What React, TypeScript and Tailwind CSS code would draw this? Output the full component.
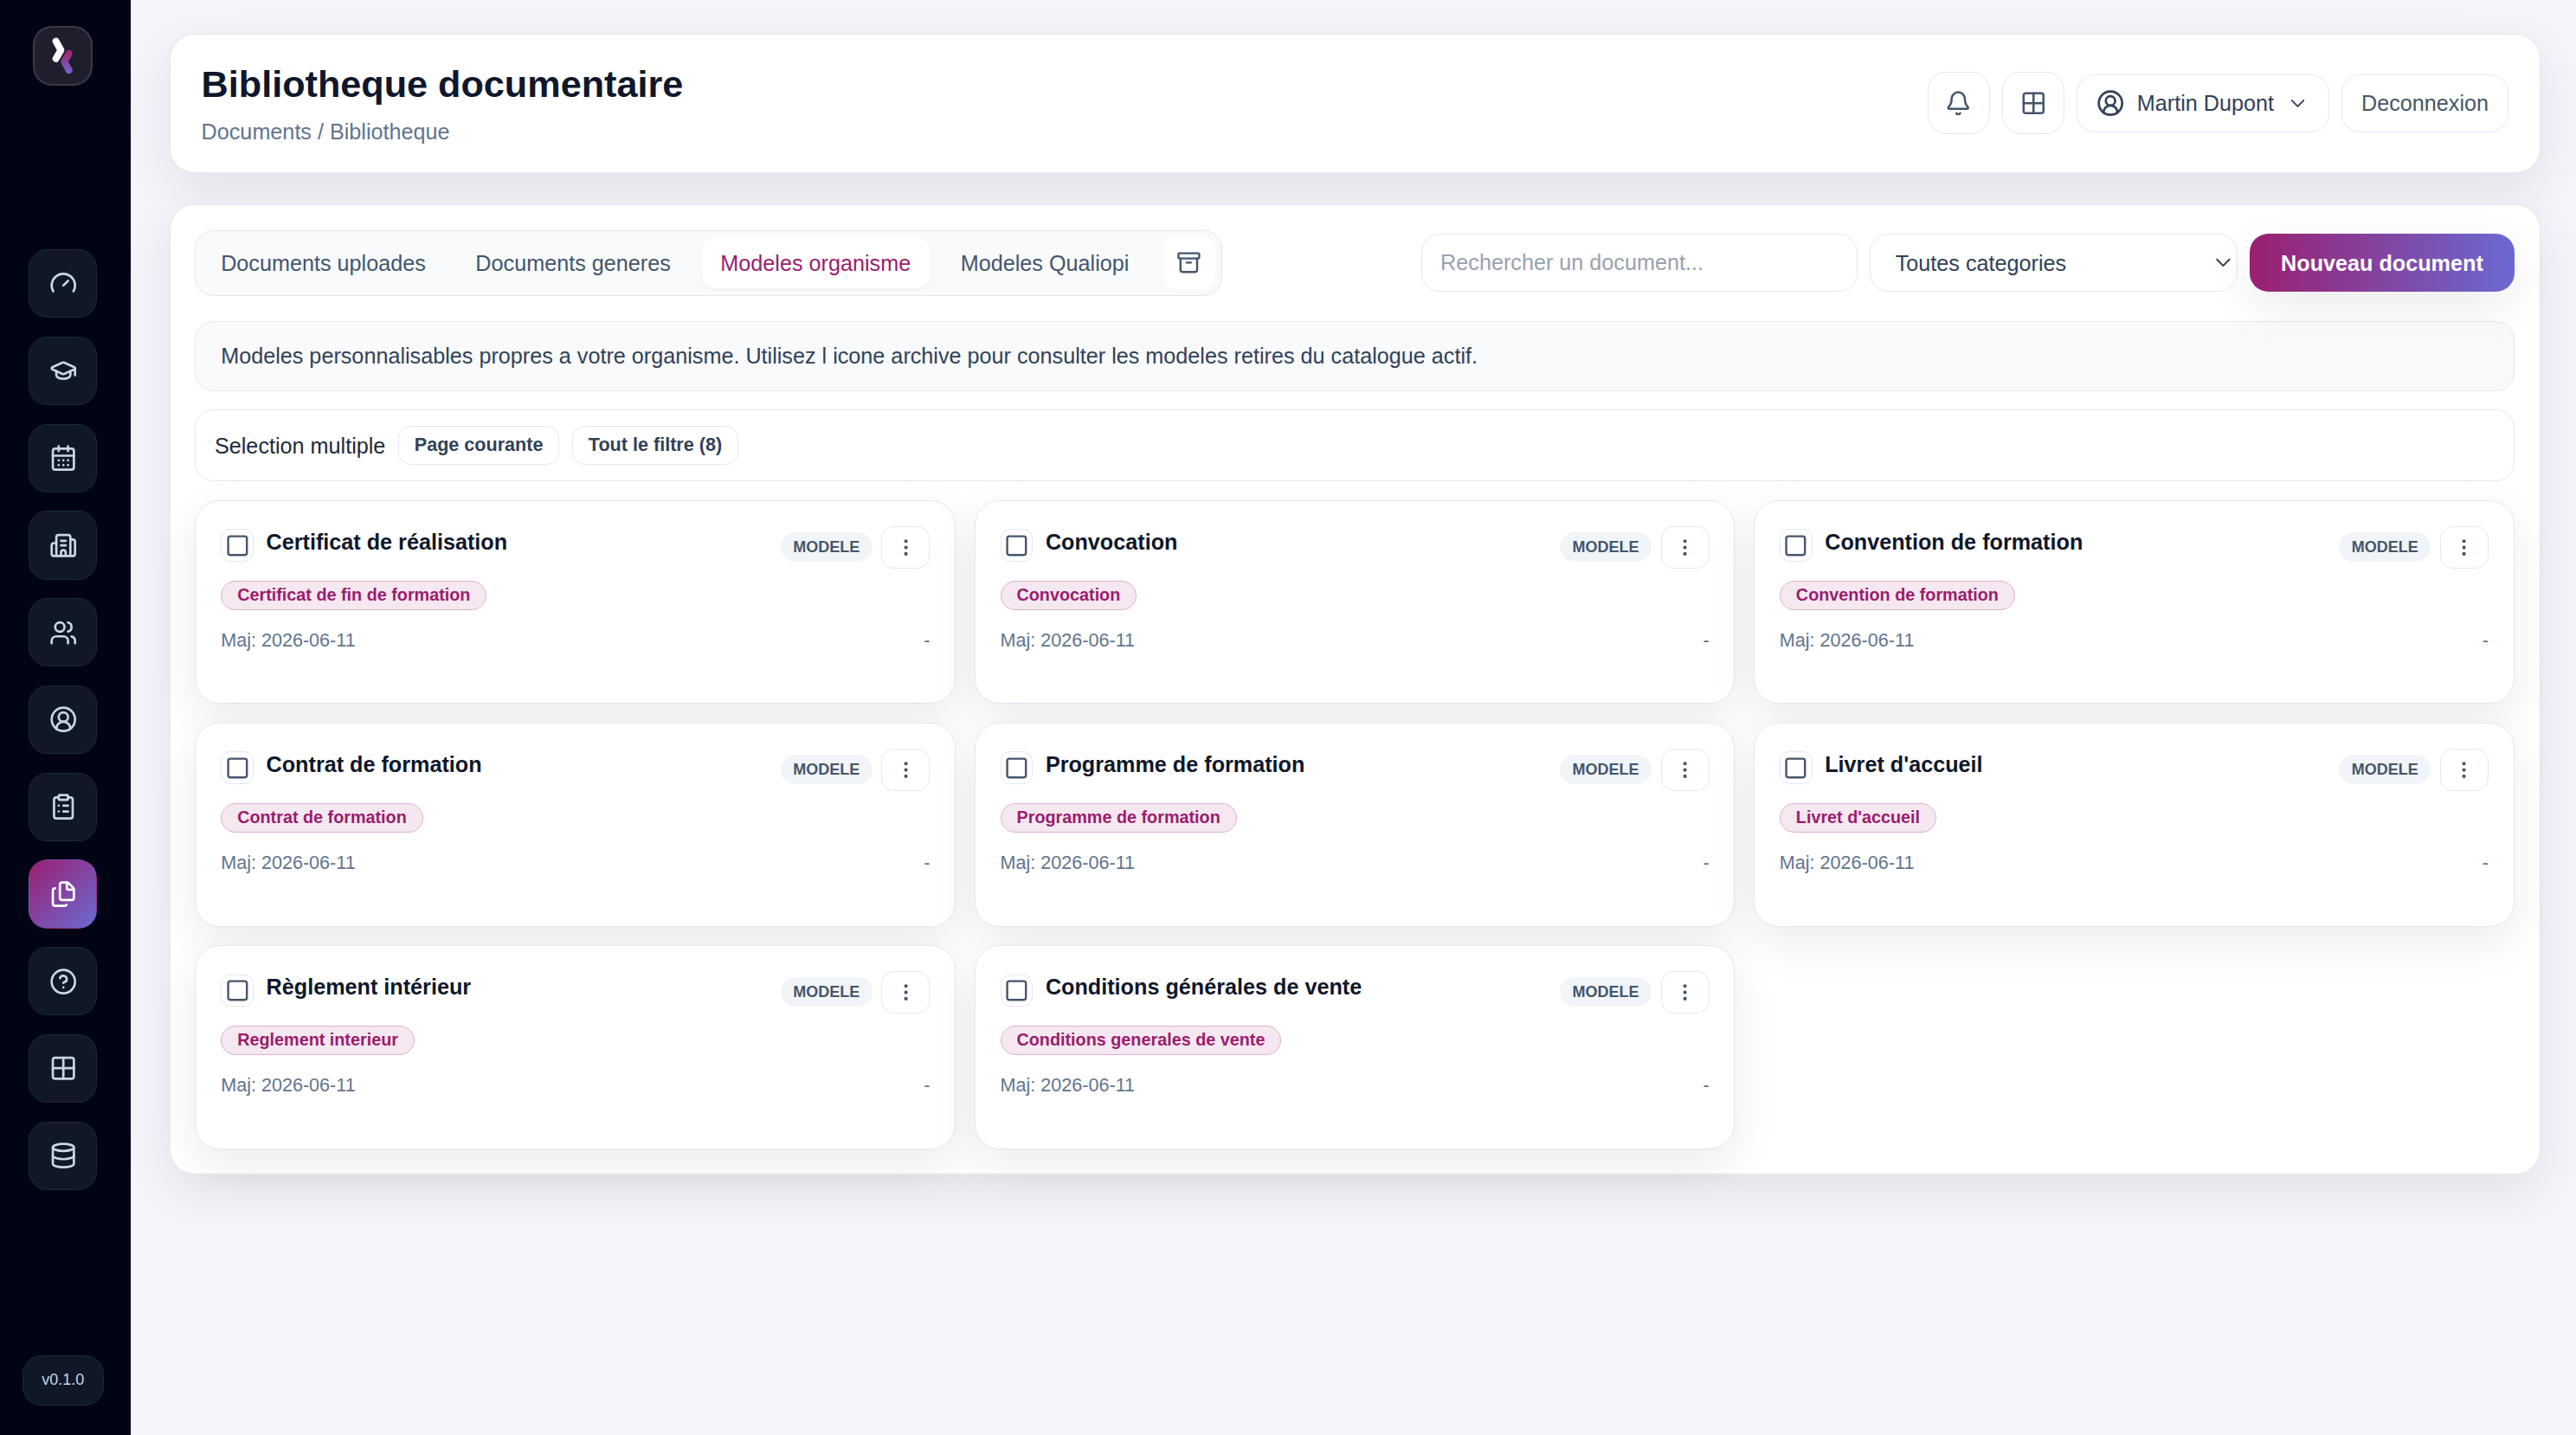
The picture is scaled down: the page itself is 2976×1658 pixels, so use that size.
import React from "react";
import {
  Archive,
  Bell,
  Building2,
  CalendarDays,
  ChevronDown,
  CircleHelp,
  CircleUserRound,
  ClipboardList,
  Database,
  EllipsisVertical,
  Files,
  Gauge,
  GraduationCap,
  Grid2x2,
  Square,
  Users,
  type LucideIcon,
} from "lucide-react";

const NAV: { icon: LucideIcon; label: string; active?: boolean }[] = [
  { icon: Gauge, label: "Tableau de bord" },
  { icon: GraduationCap, label: "Formations" },
  { icon: CalendarDays, label: "Calendrier" },
  { icon: Building2, label: "Entreprises" },
  { icon: Users, label: "Apprenants" },
  { icon: CircleUserRound, label: "Formateurs" },
  { icon: ClipboardList, label: "Evaluations" },
  { icon: Files, label: "Documents", active: true },
  { icon: CircleHelp, label: "Aide" },
  { icon: Grid2x2, label: "Applications" },
  { icon: Database, label: "Donnees" },
];

const TABS = ["Documents uploades", "Documents generes", "Modeles organisme", "Modeles Qualiopi"];
const ACTIVE_TAB = "Modeles organisme";

const DOCS = [
  { title: "Certificat de réalisation", tag: "Certificat de fin de formation" },
  { title: "Convocation", tag: "Convocation" },
  { title: "Convention de formation", tag: "Convention de formation" },
  { title: "Contrat de formation", tag: "Contrat de formation" },
  { title: "Programme de formation", tag: "Programme de formation" },
  { title: "Livret d'accueil", tag: "Livret d'accueil" },
  { title: "Règlement intérieur", tag: "Reglement interieur" },
  { title: "Conditions générales de vente", tag: "Conditions generales de vente" },
];

function Logo() {
  return (
    <svg viewBox="0 0 69 69" className="size-[38.3px] shrink-0" fill="none">
      <defs>
        <linearGradient id="logo-accent" x1="0" y1="27" x2="0" y2="55" gradientUnits="userSpaceOnUse">
          <stop offset="0.1" stopColor="#a0256b" />
          <stop offset="1" stopColor="#6f67d4" />
        </linearGradient>
      </defs>
      <rect x="1" y="1" width="67" height="67" rx="21" fill="#1e1e2d" stroke="#3b3b47" strokeWidth="2" />
      <path d="M26.7 17.8 32.4 28l-5.7 9.8" stroke="#fff" strokeWidth="8" strokeLinecap="round" strokeLinejoin="round" />
      <path d="M41.7 31.6 36.3 41.3 41.7 51" stroke="url(#logo-accent)" strokeWidth="8" strokeLinecap="round" strokeLinejoin="round" />
    </svg>
  );
}

function Sidebar() {
  return (
    <aside className="flex w-[84.67px] shrink-0 flex-col items-center border-r border-slate-200 bg-[#010414] pt-[16.7px] pr-[3.2px] pb-[19.1px]">
      <Logo />
      <nav className="flex flex-1 flex-col items-center justify-center gap-3 pb-px">
        {NAV.map(({ icon: Icon, label, active }) => (
          <button
            key={label}
            aria-label={label}
            className={
              active
                ? "flex size-11 items-center justify-center rounded-xl border border-transparent bg-[linear-gradient(135deg,#9b1f70,#6a6ad2)] text-white"
                : "flex size-11 items-center justify-center rounded-xl border border-slate-800 bg-[#101727] text-slate-300"
            }
          >
            <Icon size={18} />
          </button>
        ))}
      </nav>
      <span className="rounded-xl border border-slate-800 bg-[#101727] px-3 py-2 text-[10px] leading-[15px] text-slate-300">
        v0.1.0
      </span>
    </aside>
  );
}

function Header() {
  return (
    <header className="flex items-center justify-between rounded-2xl border border-slate-200 bg-white px-5 py-4 shadow-[0_10px_30px_rgba(0,0,0,0.08)]">
      <div>
        <h1 className="text-2xl leading-[31.6px] font-bold text-slate-900">Bibliotheque documentaire</h1>
        <p className="mt-[4.4px] text-sm text-slate-500">Documents / Bibliotheque</p>
      </div>
      <div className="flex items-center gap-2">
        <button aria-label="Notifications" className="flex size-10 items-center justify-center rounded-xl border border-slate-200 text-slate-600">
          <Bell size={17} />
        </button>
        <button aria-label="Applications" className="flex size-10 items-center justify-center rounded-xl border border-slate-200 text-slate-600">
          <Grid2x2 size={17} />
        </button>
        <button className="flex items-center gap-2 rounded-xl border border-slate-200 px-3 py-2 text-sm text-slate-700">
          <CircleUserRound size={18} />
          Martin Dupont
          <ChevronDown size={15} strokeWidth={1.7} />
        </button>
        <button className="rounded-xl border border-slate-200 px-3 py-2 text-sm text-slate-600">Deconnexion</button>
      </div>
    </header>
  );
}

function Toolbar() {
  return (
    <div className="flex items-center justify-between">
      <div className="flex items-center gap-2 rounded-xl border border-slate-200 bg-slate-50 p-1">
        {TABS.map((tab) => (
          <button
            key={tab}
            className={
              tab === ACTIVE_TAB
                ? "rounded-lg bg-white px-3 py-1.5 text-sm text-[#9b1c6e] shadow-[0_1px_2px_rgba(0,0,0,0.05)]"
                : "rounded-lg px-3 py-1.5 text-sm text-slate-600"
            }
          >
            {tab}
          </button>
        ))}
        <button aria-label="Archives" className="ml-0.5 rounded-lg border border-transparent bg-white p-2 text-slate-600">
          <Archive size={16} />
        </button>
      </div>
      <div className="flex items-stretch gap-2">
        <input
          placeholder="Rechercher un document..."
          className="w-[280px] rounded-xl border border-slate-200 bg-white px-3 py-2 text-sm placeholder:text-gray-400"
        />
        <button className="flex w-[236px] items-center justify-between rounded-xl border border-slate-200 bg-white py-2 pr-[0.5px] pl-4 text-sm text-slate-700">
          Toutes categories
          <ChevronDown size={16} strokeWidth={1.6} />
        </button>
        <button className="rounded-xl bg-[linear-gradient(90deg,#9b1f70,#6a6ad2)] px-5 text-sm font-bold text-white shadow-[0_10px_30px_rgba(0,0,0,0.08)]">
          Nouveau document
        </button>
      </div>
    </div>
  );
}

function DocumentCard({ title, tag }: { title: string; tag: string }) {
  return (
    <article className="h-[130.8px] rounded-2xl border border-slate-200 bg-white p-4 shadow-[0_10px_30px_rgba(0,0,0,0.08)]">
      <div className="flex items-start justify-between">
        <div className="flex items-start gap-2">
          <button aria-label="Selectionner" className="mt-0.5 rounded-md border border-slate-200 p-0.5 text-slate-600">
            <Square size={16} />
          </button>
          <h2 className="text-sm font-bold text-slate-900">{title}</h2>
        </div>
        <div className="flex items-center gap-1.5">
          <span className="rounded-full bg-slate-100 px-2 py-0.5 text-[10px] leading-[15px] font-bold text-slate-600">MODELE</span>
          <button aria-label="Actions" className="rounded-lg border border-slate-200 px-2 py-1.5 text-slate-600">
            <EllipsisVertical size={14} />
          </button>
        </div>
      </div>
      <div className="mt-2 flex">
        <span className="rounded-full border border-[#e0b0cf] bg-[#f5e8f1] px-2.5 pt-[1.7px] pb-[2.3px] text-[11px] leading-[14px] font-bold text-[#9b1c6e]">
          {tag}
        </span>
      </div>
      <div className="mt-[11.2px] flex justify-between text-xs text-slate-500">
        <span>Maj: 2026-06-11</span>
        <span>-</span>
      </div>
    </article>
  );
}

export default function App() {
  return (
    <div className="flex h-[921.1px] w-[1653.33px] overflow-hidden bg-[#f4f5fb] font-['Liberation_Sans',Arial,sans-serif] text-slate-800 antialiased [zoom:1.8]">
      <Sidebar />
      <main className="flex min-w-0 flex-1 flex-col gap-[20.2px] pt-[21.8px] pr-[23px] pl-6">
        <Header />
        <section className="rounded-2xl border border-slate-200 bg-white p-4 shadow-[0_10px_30px_rgba(0,0,0,0.08)]">
          <Toolbar />
          <p className="mt-4 rounded-xl border border-slate-200 bg-slate-50 px-4 py-3 text-sm text-slate-700">
            Modeles personnalisables propres a votre organisme. Utilisez l icone archive pour consulter les modeles retires du catalogue actif.
          </p>
          <div className="mt-3 flex items-center gap-2 rounded-xl border border-slate-200 px-3 py-2.5">
            <span className="text-sm">Selection multiple</span>
            <button className="rounded-lg border border-slate-200 px-2.5 py-1 text-xs font-bold text-slate-700">Page courante</button>
            <button className="rounded-lg border border-slate-200 px-2.5 py-1 text-xs font-bold text-slate-700">Tout le filtre (8)</button>
          </div>
          <div className="mt-3 grid grid-cols-3 gap-3">
            {DOCS.map((doc) => (
              <DocumentCard key={doc.title} title={doc.title} tag={doc.tag} />
            ))}
          </div>
        </section>
      </main>
    </div>
  );
}
